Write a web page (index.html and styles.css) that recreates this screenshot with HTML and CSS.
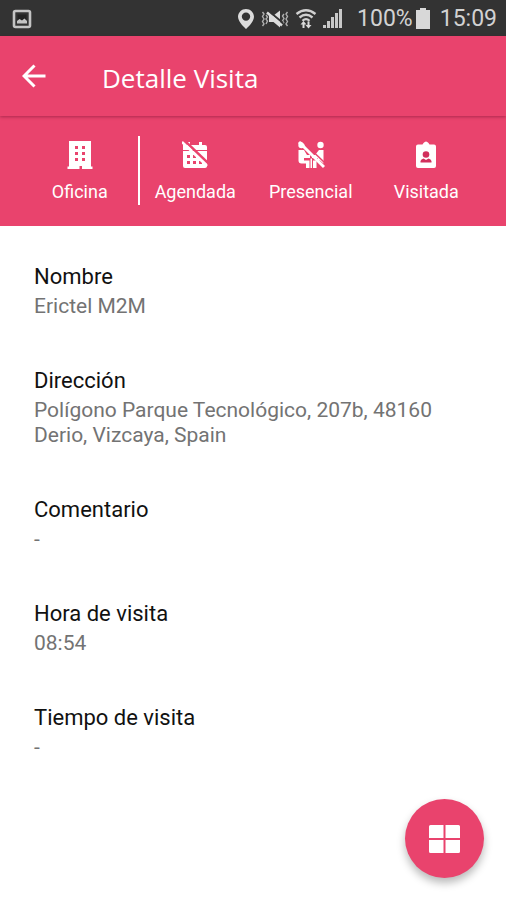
FILE: index.html
```
<!DOCTYPE html>
<html lang="es">
<head>
<meta charset="utf-8">
<meta name="viewport" content="width=device-width, initial-scale=1">
<title>Detalle Visita</title>
<link rel="stylesheet" href="styles.css">
</head>
<body>
<div class="status">
  <svg class="status-photo" width="20" height="20" viewBox="0 0 20 20" aria-hidden="true"><rect x="2" y="2" width="16" height="16" rx="1.5" fill="none" stroke="#c4c4c4" stroke-width="2.6"/><path d="M5.500 5.500h9v6l-2-1-2.500 1.500-2-1.500-2.500 1.500z" fill="#222"/><path d="M5 14.500v-2.500l2.500-2 2.500 1.500 2.500-2 2.500 2.500v2.500z" fill="#c4c4c4"/></svg>
  <div class="status-right">
    <svg width="18" height="22" viewBox="0 0 18 22" aria-hidden="true"><path d="M9 1C4.600 1 1 4.500 1 8.700 1 14 9 21 9 21s8-7 8-12.300C17 4.500 13.400 1 9 1zm0 3.400a4.200 4.200 0 1 1 0 8.400 4.200 4.200 0 0 1 0-8.400z" fill="#dcdcdc" fill-rule="evenodd"/></svg>
    <svg width="28" height="22" viewBox="0 0 28 22" aria-hidden="true"><g fill="none" stroke="#b0b0b0" stroke-width="1.400"><path d="M1.500 4l1.500 2-1.500 2.500L3 11l-1.500 2.500L3 16l-1.500 2M5 7l1.500 2L5 11l1.500 2L5 16M26.500 4L25 6l1.500 2.500L25 11l1.500 2.500L25 16l1.500 2M23 6l-1.500 2L23 10.500 21.500 13l1.500 2"/></g><path d="M8 7.500h4.500L19 2.500v17L12.500 14H8z" fill="#dcdcdc"/><path d="M7 2.500l15 12.500" stroke="#333" stroke-width="2"/><path d="M6 4.500l15 13" stroke="#dcdcdc" stroke-width="2.500"/></svg>
    <svg width="22" height="22" viewBox="0 0 22 22" aria-hidden="true"><g fill="none" stroke="#d0d0d0" stroke-width="2.300"><path d="M1.500 6Q11-1.500 20.500 6M4.500 9.500Q11 4 17.500 9.500M7.500 12.800Q11 9.500 14.500 12.800"/></g><path d="M8.500 13l3 3.500h-2V20h-2v-3.500h-2zM13.500 20.500l-3-3.500h2v-3.500h2V17h2z" fill="#dcdcdc"/></svg>
    <svg width="20" height="22" viewBox="0 0 20 22" aria-hidden="true"><path d="M0 17h3v3H0zM4 13h3v7H4zM8 9h3v11H8zM12 5h3v15h-3zM16 1h3v19h-3z" fill="#c8c8c8"/></svg>
    <span class="status-battery">100%</span>
    <svg width="16" height="22" viewBox="0 0 16 22" aria-hidden="true"><path d="M5 0h6v2h4v19H1V2h4z" fill="#d8d8d8"/></svg>
    <time class="status-time">15:09</time>
  </div>
</div>
<header class="bar">
  <button class="back" type="button" aria-label="Volver"><svg width="24" height="24" viewBox="0 0 24 24" aria-hidden="true"><path d="M12.500 1.500L2 12l10.500 10.500M2 12h21.500" fill="none" stroke="#fff" stroke-width="3"/></svg></button>
  <h1 class="title">Detalle Visita</h1>
</header>
<ul class="tags">
  <li class="tag tag-main">
    <svg width="26" height="28" viewBox="0 0 26 28" aria-hidden="true"><path fill="#fff" fill-rule="evenodd" d="M2 0h22v25.500h1.500V28h-10.500v-3h-2.500v3H.5v-2.500H2zM8 5v3h3V5zm7 0v3h3V5zm-7 6v3h3v-3zm7 0v3h3v-3zm-7 6v3h3v-3zm7 0v3h3v-3z"/></svg>
    <span>Oficina</span>
  </li>
  <li class="tag">
    <svg width="26" height="28" viewBox="0 0 26 28" aria-hidden="true"><path fill="#fff" fill-rule="evenodd" d="M1 4h4V1h3v3h9V1h3v3h3q2 0 2 2v3H1zM1 10h24V25q0 2-2 2H3q-2 0-2-2zM5 14v3h3v-3zm6 0v3h3v-3zm-6 6v3h3v-3zm6 0v3h3v-3zm6 0v3h3v-3z"/><path d="M2-1l26 25" stroke="#e9436d" stroke-width="2.500"/><path d="M0 1l25 24" stroke="#fff" stroke-width="2.500"/></svg>
    <span>Agendada</span>
  </li>
  <li class="tag">
    <svg width="28" height="28" viewBox="0 0 28 28" aria-hidden="true"><g fill="#fff"><circle cx="4.500" cy="4" r="3.200"/><circle cx="23.500" cy="4" r="3.200"/><path d="M1.500 9h5.500l3 5h3v3H7v2.500h5.500V27H9v-4.500H4.500q-3 0-3-3zM26.500 9H22l-4 5h-3v3h6v2.500h2l3.500 3zM13.500 17.500h1.500V27h-1.500zM16 19.500h3.500V27H16z"/></g><path d="M4-1l26 25" stroke="#e9436d" stroke-width="1.500"/><path d="M2 1l25 25" stroke="#fff" stroke-width="3"/></svg>
    <span>Presencial</span>
  </li>
  <li class="tag">
    <svg width="20" height="28" viewBox="0 0 20 28" aria-hidden="true"><path fill="#fff" d="M2 3.500h4.500L7.500 2Q10-1 12.500 2l1 1.500H18q2 0 2 2V25q0 2-2 2H2q-2 0-2-2V5.500q0-2 2-2z"/><g fill="#d22f5c"><circle cx="10" cy="13.500" r="3.300"/><path d="M4.500 21.500v-1.500Q5 18 7.500 17.500L10 19l2.500-1.500Q15 18 15.500 20v1.500z"/></g></svg>
    <span>Visitada</span>
  </li>
</ul>
<main>
  <dl class="fields">
    <div><dt>Nombre</dt><dd>Erictel M2M</dd></div>
    <div><dt>Dirección</dt><dd>Polígono Parque Tecnológico, 207b, 48160 Derio, Vizcaya, Spain</dd></div>
    <div><dt>Comentario</dt><dd>-</dd></div>
    <div><dt>Hora de visita</dt><dd>08:54</dd></div>
    <div><dt>Tiempo de visita</dt><dd>-</dd></div>
  </dl>
</main>
<button class="fab" type="button" aria-label="Menú"><svg width="31" height="28" viewBox="0 0 31 28" aria-hidden="true"><path d="M1.500 0H14.500V13H0V1.500Q0 0 1.500 0zM16.500 0H29.500Q31 0 31 1.500V13H16.500zM0 15H14.500V28H1.500Q0 28 0 26.500zM16.500 15H31V26.500Q31 28 29.500 28H16.500z" fill="#fff"/></svg></button>
</body>
</html>
```
FILE: styles.css
```
* { box-sizing: border-box; }

body {
  margin: 0;
  min-height: 100vh;
  background: #fff;
  color: #111;
  font-family: Roboto, "Liberation Sans", sans-serif;
}

svg { display: block; flex: none; }

button {
  border: 0;
  padding: 0;
  cursor: pointer;
}

.status {
  display: flex;
  align-items: center;
  justify-content: space-between;
  height: 36px;
  padding: 2px 9px 0 12px;
  background: #333;
  color: #d2d2d2;
  font-size: 23px;
  line-height: 32px;
}

.status-right {
  display: flex;
  align-items: center;
  gap: 6px;
}

.status-battery { margin: 0 -4px 0 8px; }

.status-time { margin-left: 3px; }

.bar {
  position: relative;
  display: flex;
  align-items: center;
  height: 80px;
  padding: 0 22px;
  background: #e9436d;
  box-shadow: 0 1px 3px rgba(80, 0, 30, 0.4);
}

.back {
  display: flex;
  align-items: center;
  width: 80px;
  height: 48px;
  background: none;
}

.title {
  margin: 0;
  padding-top: 4px;
  color: #fff;
  font-family: "Open Sans", "Noto Sans", sans-serif;
  font-size: 26px;
  font-weight: 400;
  line-height: 36px;
}

.tags {
  display: grid;
  grid-template-columns: repeat(4, 1fr);
  margin: 0;
  padding: 20px 22px 21px;
  background: #e9436d;
  color: #fff;
  list-style: none;
}

.tag {
  display: flex;
  flex-direction: column;
  align-items: center;
  gap: 10px;
  height: 69px;
  padding-top: 5px;
  font-size: 18px;
  line-height: 26px;
}

.tag-main { box-shadow: 2px 0 0 #fff; }

.fields {
  display: flex;
  flex-direction: column;
  gap: 45px;
  margin: 0;
  padding: 34px 34px 120px;
}

.fields dt {
  font-size: 22px;
  line-height: 34px;
}

.fields dd {
  margin: 0;
  color: #737373;
  font-size: 21px;
  line-height: 25px;
}

.fab {
  position: fixed;
  right: 22px;
  bottom: 22px;
  display: flex;
  align-items: center;
  justify-content: center;
  width: 79px;
  height: 79px;
  border-radius: 50%;
  background: #e9436d;
  box-shadow: 0 5px 8px rgba(0, 0, 0, 0.28);
}
```
